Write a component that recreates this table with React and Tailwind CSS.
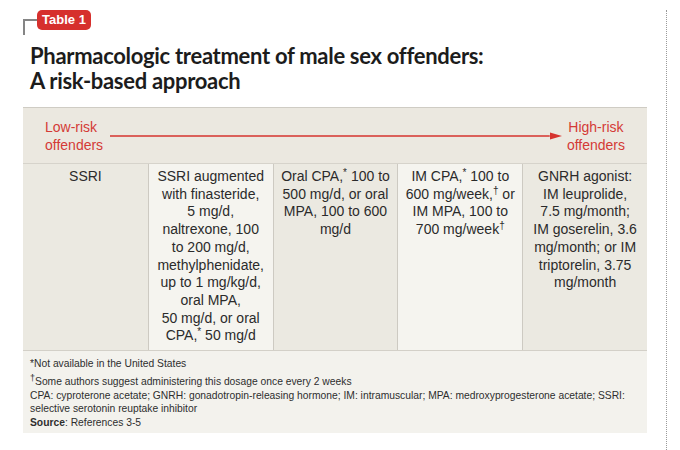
import React from "react";

const sup = "text-[10px]";

const cells = [
  { dark: true, lines: ["SSRI"] },
  {
    dark: false,
    lines: [
      "SSRI augmented",
      "with finasteride,",
      "5 mg/d,",
      "naltrexone, 100",
      "to 200 mg/d,",
      "methylphenidate,",
      "up to 1 mg/kg/d,",
      "oral MPA,",
      "50 mg/d, or oral",
      <>CPA,<sup className={sup}>*</sup> 50 mg/d</>,
    ],
  },
  {
    dark: true,
    lines: [
      <>Oral CPA,<sup className={sup}>*</sup> 100 to</>,
      "500 mg/d, or oral",
      "MPA, 100 to 600",
      "mg/d",
    ],
  },
  {
    dark: false,
    lines: [
      <>IM CPA,<sup className={sup}>*</sup> 100 to</>,
      <>600 mg/week,<sup className={sup}>†</sup> or</>,
      "IM MPA, 100 to",
      <>700 mg/week<sup className={sup}>†</sup></>,
    ],
  },
  {
    dark: true,
    lines: [
      "GNRH agonist:",
      "IM leuprolide,",
      "7.5 mg/month;",
      "IM goserelin, 3.6",
      "mg/month; or IM",
      "triptorelin, 3.75",
      "mg/month",
    ],
  },
];

export default function App() {
  return (
    <div className="flex h-[450px] w-[680px] bg-white pl-[23px]">
      <div className="flex w-[624px] flex-col">
        {/* tag */}
        <div className="flex pt-[10px]">
          <div className="mt-[9px] h-[16px] w-[14px] border-l-2 border-t-2 border-[#858585]" />
          <div className="flex h-[20px] w-[54px] items-center justify-center rounded-[5px] bg-[#d6302d] font-['Liberation_Sans',sans-serif] text-[13px] font-bold text-white">
            Table 1
          </div>
        </div>

        <h1 className="ml-[7px] mt-[8px] font-['Lato',sans-serif] text-[22px] font-bold leading-[25px] tracking-[-0.3px] text-[#1c1c1c]">
          Pharmacologic treatment of male sex offenders:
          <br />
          A risk-based approach
        </h1>

        {/* table */}
        <div className="mt-[14px] border-t border-[#cfccc4] font-['Liberation_Sans',Arial,sans-serif]">
          <div className="flex items-center border-b border-[#d6d3cb] bg-[#ebe8e0] pb-[9px] pl-[22px] pr-[22px] pt-[10px] text-[14px] leading-[18px] text-[#d43a36]">
            <div>
              Low-risk
              <br />
              offenders
            </div>
            <svg className="ml-[7px] h-[10px] flex-1" viewBox="0 0 100 10" preserveAspectRatio="none">
              <line x1="0" y1="5" x2="100" y2="5" stroke="#d6342f" strokeWidth="1.6" vectorEffect="non-scaling-stroke" />
            </svg>
            <svg className="mr-[5px] h-[8px] w-[12px]" viewBox="0 0 12 8">
              <polygon points="0,0.5 12,4 0,7.5" fill="#d6342f" />
            </svg>
            <div className="text-center">
              High-risk
              <br />
              offenders
            </div>
          </div>

          <div className="grid grid-cols-5 border-b border-[#d3d0c8] text-[14px] leading-[17.7px] text-[#2b2b2b]">
            {cells.map((c, i) => (
              <div
                key={i}
                className={`px-[6px] pb-[5px] pt-[4px] text-center ${c.dark ? "bg-[#ebe9e1]" : "bg-[#f5f4ef]"} ${i > 0 ? "border-l border-[#cdcac2]" : ""}`}
              >
                {c.lines.map((l, j) => (
                  <div key={j} className="whitespace-nowrap">
                    {l}
                  </div>
                ))}
              </div>
            ))}
          </div>

          <div className="bg-[#f3f2ed] pb-[4px] pl-[7px] pt-[6px] text-[10.3px] leading-[13.4px] text-[#2e2e2e]">
            <p className="mb-[5px]">*Not available in the United States</p>
            <p>
              <sup className="text-[9px]">†</sup>Some authors suggest administering this dosage once every 2 weeks
            </p>
            <p>
              CPA: cyproterone acetate; GNRH: gonadotropin-releasing hormone; IM: intramuscular; MPA: medroxyprogesterone acetate; SSRI:
              <br />
              selective serotonin reuptake inhibitor
            </p>
            <p>
              <span className="font-bold">Source</span>: References 3-5
            </p>
          </div>
        </div>
      </div>

      {/* dotted margin rule */}
      <div className="ml-[19px] mt-[10px] border-l border-dotted border-[#9a9a9a]" />
    </div>
  );
}
